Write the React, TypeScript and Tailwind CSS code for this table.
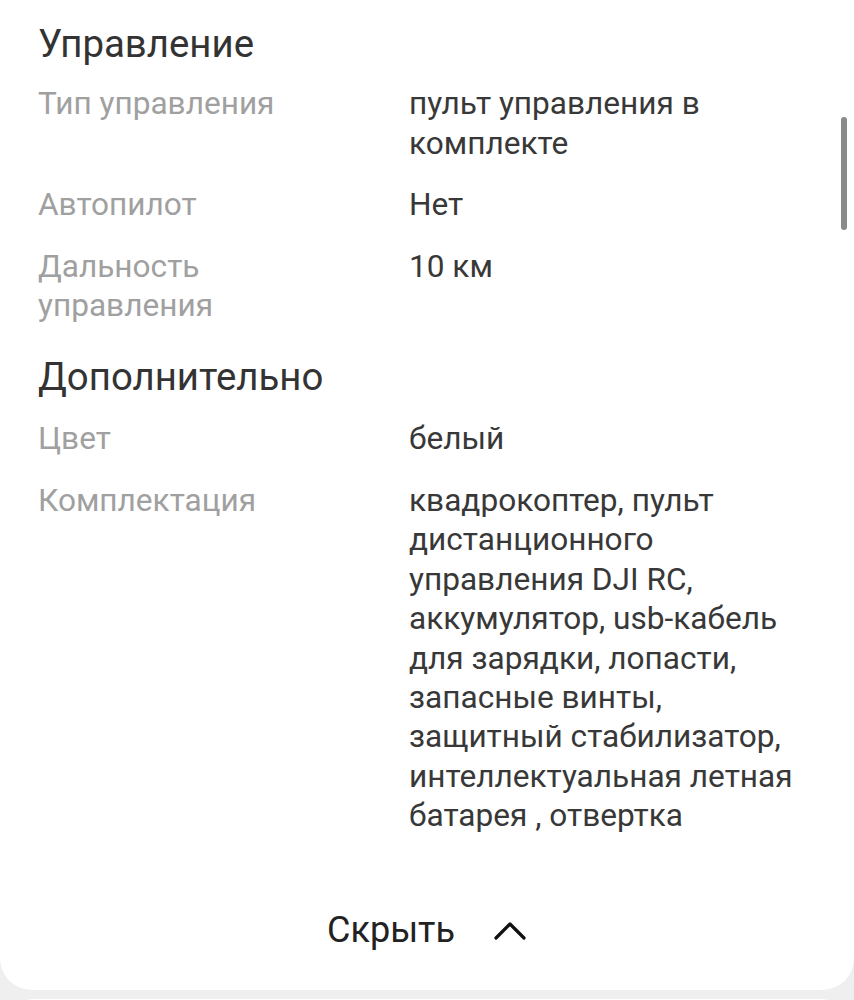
import React from "react";

const font = { fontFamily: "Roboto, 'Noto Sans', sans-serif" };

function Row({ label, value }: { label: React.ReactNode; value: React.ReactNode }) {
  return (
    <div className="flex">
      <div className="w-[371px] shrink-0 text-[#a0a0a0]">{label}</div>
      <div className="w-[388px] text-[#383838]">{value}</div>
    </div>
  );
}

export default function App() {
  return (
    <div className="w-[854px] h-[1000px] overflow-hidden bg-[#efefef]" style={font}>
      <div className="relative bg-white rounded-b-[32px] pl-[38px] pt-[22px] pb-[38px]">
        <div className="text-[38.4px] leading-[44px] text-[#333333]">Управление</div>
        <div className="mt-[18px] flex flex-col gap-[22px] text-[31.6px] leading-[39.5px]">
          <Row label="Тип управления" value="пульт управления в комплекте" />
          <Row label="Автопилот" value="Нет" />
          <Row label={<>Дальность<br />управления</>} value="10 км" />
        </div>
        <div className="mt-[29px] text-[38.4px] leading-[44px] text-[#333333]">Дополнительно</div>
        <div className="mt-[20px] flex flex-col gap-[23px] text-[31.6px] leading-[39.4px]">
          <Row label="Цвет" value="белый" />
          <Row
            label="Комплектация"
            value="квадрокоптер, пульт дистанционного управления DJI RC, аккумулятор, usb-кабель для зарядки, лопасти, запасные винты, защитный стабилизатор, интеллектуальная летная батарея , отвертка"
          />
        </div>
        <div className="mt-[72px] flex items-center justify-center pr-[38px]">
          <span className="text-[36px] leading-[44px] text-[#222222]">Скрыть</span>
          <svg className="ml-[38px]" width="34" height="22" viewBox="0 0 34 22" fill="none">
            <path d="M3 19 L17 5 L31 19" stroke="#111" strokeWidth="3.2" strokeLinecap="round" strokeLinejoin="round" />
          </svg>
        </div>
        <div className="absolute right-[7px] top-[117px] w-[6px] h-[113px] rounded-full bg-[#8a8a8a]" />
      </div>
      <div className="mt-[9px] h-[40px] bg-white rounded-t-[32px] mx-[2px]" />
    </div>
  );
}
